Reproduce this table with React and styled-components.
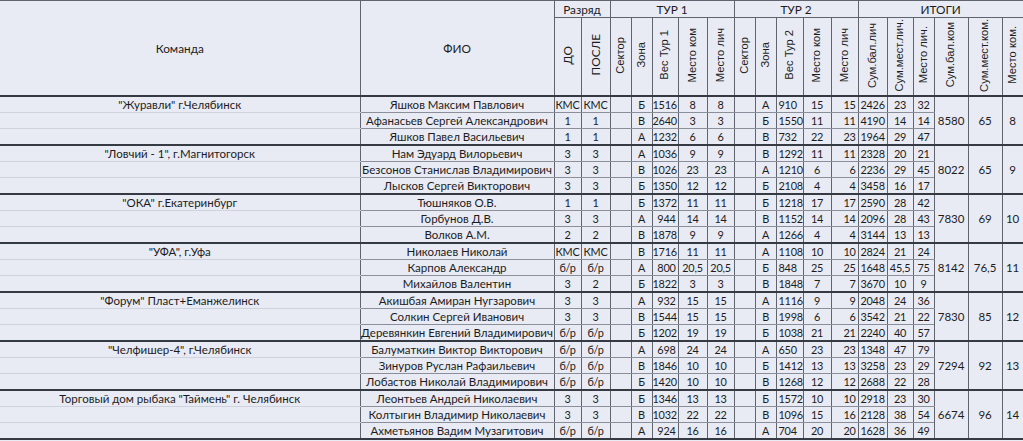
import React from "react";
import styled, { createGlobalStyle } from "styled-components";

const GlobalStyle = createGlobalStyle`
  html, body {
    margin: 0;
    padding: 0;
    background: #e9ebf4;
  }
`;

const COLS = [360, 194, 27, 29, 21, 21, 26, 29, 27, 21, 21, 27, 28, 27, 29, 26, 21, 34, 34, 21];

// alignment of each per-person column after ФИО
const ALIGN = ["center", "center", "center", "center", "right", "center", "center", "center", "center", "left", "center", "right", "center", "center", "center"];

const groups = [
  {
    team: '"Журавли" г.Челябинск', total: ["8580", "65", "8"], rows: [
      ["Яшков Максим Павлович", "КМС", "КМС", "", "Б", "1516", "8", "8", "", "А", "910", "15", "15", "2426", "23", "32"],
      ["Афанасьев Сергей Александрович", "1", "1", "", "В", "2640", "3", "3", "", "Б", "1550", "11", "11", "4190", "14", "14"],
      ["Яшков Павел Васильевич", "1", "1", "", "А", "1232", "6", "6", "", "В", "732", "22", "23", "1964", "29", "47"],
    ],
  },
  {
    team: '"Ловчий - 1", г.Магнитогорск', total: ["8022", "65", "9"], rows: [
      ["Нам Эдуард Вилорьевич", "3", "3", "", "А", "1036", "9", "9", "", "В", "1292", "11", "11", "2328", "20", "21"],
      ["Безсонов Станислав Владимирович", "3", "3", "", "В", "1026", "23", "23", "", "А", "1210", "6", "6", "2236", "29", "45"],
      ["Лысков Сергей Викторович", "3", "3", "", "Б", "1350", "12", "12", "", "Б", "2108", "4", "4", "3458", "16", "17"],
    ],
  },
  {
    team: '"ОКА" г.Екатеринбург', total: ["7830", "69", "10"], rows: [
      ["Тюшняков О.В.", "1", "1", "", "Б", "1372", "11", "11", "", "Б", "1218", "17", "17", "2590", "28", "42"],
      ["Горбунов Д.В.", "3", "3", "", "А", "944", "14", "14", "", "В", "1152", "14", "14", "2096", "28", "43"],
      ["Волков А.М.", "2", "2", "", "В", "1878", "9", "9", "", "А", "1266", "4", "4", "3144", "13", "13"],
    ],
  },
  {
    team: '"УФА", г.Уфа', total: ["8142", "76,5", "11"], rows: [
      ["Николаев Николай", "КМС", "КМС", "", "В", "1716", "11", "11", "", "А", "1108", "10", "10", "2824", "21", "24"],
      ["Карпов Александр", "б/р", "б/р", "", "А", "800", "20,5", "20,5", "", "Б", "848", "25", "25", "1648", "45,5", "75"],
      ["Михайлов Валентин", "3", "2", "", "Б", "1822", "3", "3", "", "В", "1848", "7", "7", "3670", "10", "9"],
    ],
  },
  {
    team: '"Форум" Пласт+Еманжелинск', total: ["7830", "85", "12"], rows: [
      ["Акишбая Амиран Нугзарович", "3", "3", "", "А", "932", "15", "15", "", "А", "1116", "9", "9", "2048", "24", "36"],
      ["Солкин Сергей Иванович", "3", "3", "", "В", "1544", "15", "15", "", "В", "1998", "6", "6", "3542", "21", "22"],
      ["Деревянкин Евгений Владимирович", "б/р", "б/р", "", "Б", "1202", "19", "19", "", "Б", "1038", "21", "21", "2240", "40", "57"],
    ],
  },
  {
    team: '"Челфишер-4", г.Челябинск', total: ["7294", "92", "13"], rows: [
      ["Балуматкин Виктор Викторович", "б/р", "б/р", "", "А", "698", "24", "24", "", "А", "650", "23", "23", "1348", "47", "79"],
      ["Зинуров Руслан Рафаильевич", "б/р", "б/р", "", "В", "1846", "10", "10", "", "Б", "1412", "13", "13", "3258", "23", "29"],
      ["Лобастов Николай Владимирович", "б/р", "б/р", "", "Б", "1420", "10", "10", "", "В", "1268", "12", "12", "2688", "22", "28"],
    ],
  },
  {
    team: 'Торговый дом рыбака "Таймень" г. Челябинск', total: ["6674", "96", "14"], rows: [
      ["Леонтьев Андрей Николаевич", "3", "3", "", "Б", "1346", "13", "13", "", "Б", "1572", "10", "10", "2918", "23", "30"],
      ["Колтыгин Владимир Николаевич", "3", "3", "", "В", "1032", "22", "22", "", "В", "1096", "15", "16", "2128", "38", "54"],
      ["Ахметьянов Вадим Музагитович", "б/р", "б/р", "", "А", "924", "16", "16", "", "А", "704", "20", "20", "1628", "36", "49"],
    ],
  },
];

const Sheet = styled.table`
  width: 1023px;
  table-layout: fixed;
  border-collapse: collapse;
  font-family: Lato, "Open Sans", sans-serif;
  font-size: 11.8px;
  color: #1c1c1c;
`;

const HeadCell = styled.th`
  font-weight: normal;
  padding: 0;
  height: ${(p) => p.$h || 16}px;
  border: 1px solid #5f646e;
  border-bottom: ${(p) => (p.$thick ? "2px solid #353a43" : "1px solid #5f646e")};
  text-align: center;
  vertical-align: middle;
`;

const Vertical = styled.span`
  display: inline-block;
  writing-mode: vertical-rl;
  transform: rotate(180deg);
  white-space: nowrap;
  font-family: ${(p) => (p.$arial ? '"Liberation Sans", Arial, sans-serif' : 'Lato, sans-serif')};
  font-size: ${(p) => (p.$arial ? "11.2px" : "11.8px")};
  line-height: 1;
`;

const Cell = styled.td`
  height: 15px;
  padding: 0 ${(p) => (p.$align === "right" ? "2px" : "0")} 0 ${(p) => (p.$align === "left" ? "2px" : "0")};
  line-height: 15px;
  white-space: nowrap;
  overflow: visible;
  text-align: ${(p) => p.$align || "center"};
  font-size: ${(p) => (p.$name ? "11.5px" : "10.9px")};
  letter-spacing: ${(p) => (p.$name ? "0" : "-0.25px")};
  border: 1px solid #5f646e;
  border-top-color: #8a8f99;
  border-bottom: ${(p) => (p.$last ? "2px solid #353a43" : "1px solid #8a8f99")};
`;

const TeamCell = styled.td`
  height: 15px;
  padding: 0;
  line-height: 15px;
  text-align: center;
  white-space: nowrap;
  font-size: 11.5px;
  border-left: none;
  border-right: 1px solid #5f646e;
  border-bottom: ${(p) => (p.$last ? "2px solid #353a43" : "1px solid #cfd3de")};
`;

const TotalCell = styled.td`
  padding: 0;
  text-align: center;
  vertical-align: middle;
  font-size: 11.5px;
  border: 1px solid #5f646e;
  border-bottom: 2px solid #353a43;
`;

const tur = ["Сектор", "Зона", "Вес Тур ", "Место ком", "Место лич"];
const itogi = ["Сум.бал.лич", "Сум.мест.лич.", "Место лич.", "Сум.бал.ком", "Сум.мест.ком.", "Место ком."];

function Group({ g }) {
  return g.rows.map((r, i) => {
    const last = i === g.rows.length - 1;
    return (
      <tr key={i}>
        <TeamCell $last={last}>{i === 0 ? g.team : ""}</TeamCell>
        <Cell $last={last} $name>{r[0]}</Cell>
        {r.slice(1).map((v, j) => (
          <Cell key={j} $last={last} $align={ALIGN[j]}>{v}</Cell>
        ))}
        {i === 0 &&
          g.total.map((t, k) => (
            <TotalCell key={k} rowSpan={3}>{t}</TotalCell>
          ))}
      </tr>
    );
  });
}

export default function App() {
  return (
    <>
      <GlobalStyle />
      <Sheet>
        <colgroup>
          {COLS.map((w, i) => (
            <col key={i} style={{ width: w }} />
          ))}
        </colgroup>
        <thead>
          <tr>
            <HeadCell rowSpan={2} $thick style={{ borderLeft: "none" }}>Команда</HeadCell>
            <HeadCell rowSpan={2} $thick>ФИО</HeadCell>
            <HeadCell colSpan={2}>Разряд</HeadCell>
            <HeadCell colSpan={5}>ТУР 1</HeadCell>
            <HeadCell colSpan={5}>ТУР 2</HeadCell>
            <HeadCell colSpan={6}>ИТОГИ</HeadCell>
          </tr>
          <tr>
            <HeadCell $h={77} $thick><Vertical>ДО</Vertical></HeadCell>
            <HeadCell $h={77} $thick><Vertical>ПОСЛЕ</Vertical></HeadCell>
            {[1, 2].map((n) =>
              tur.map((t) => (
                <HeadCell key={n + t} $h={77} $thick>
                  <Vertical $arial>{t === "Вес Тур " ? t + n : t}</Vertical>
                </HeadCell>
              ))
            )}
            {itogi.map((t) => (
              <HeadCell key={t} $h={77} $thick>
                <Vertical $arial>{t}</Vertical>
              </HeadCell>
            ))}
          </tr>
        </thead>
        <tbody>
          {groups.map((g, i) => (
            <Group key={i} g={g} />
          ))}
        </tbody>
      </Sheet>
    </>
  );
}
